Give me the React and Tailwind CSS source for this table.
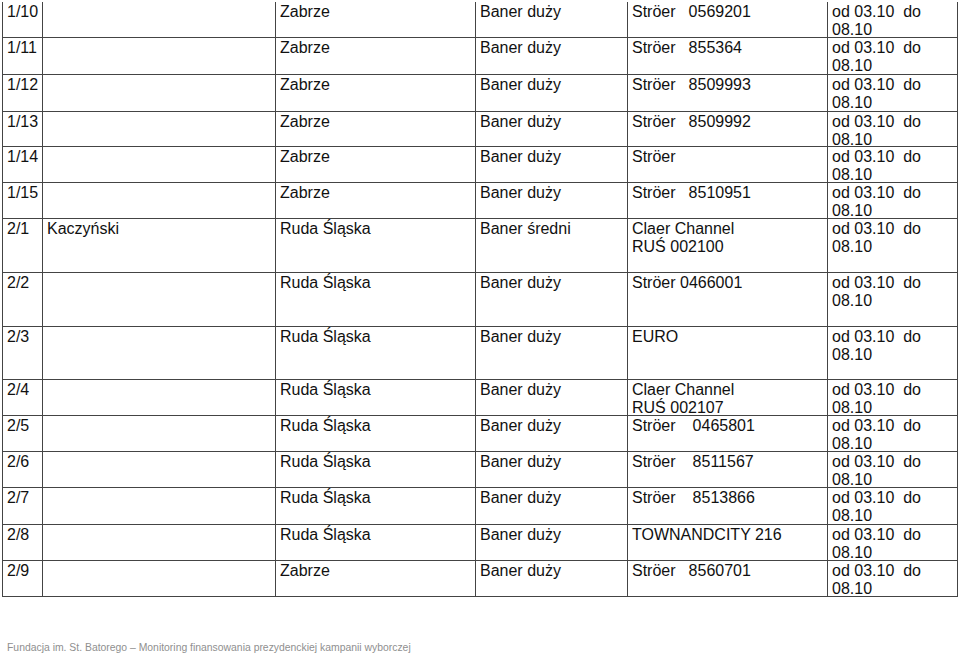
import React from 'react';

// column widths incl. right border: lines at x = 42, 275, 475, 627, 827, 957
const cols = ['w-[40px]', 'w-[233px]', 'w-[200px]', 'w-[152px]', 'w-[200px]', 'w-[130px]'];

const Stroer = ({ num, wide }) => (
    <span>
        Ströer<span className={wide ? 'ml-[17px]' : 'ml-[13px]'}>{num}</span>
    </span>
);

const Two = ({ a, b }) => (
    <span>
        {a}
        <br />
        {b}
    </span>
);

const date = <span className="whitespace-pre">{'od 03.10  do\n08.10'}</span>;

const rows = [
    { h: 'h-[36px]', c: ['1/10', '', 'Zabrze', 'Baner duży', <Stroer num="0569201" />] },
    { h: 'h-[37px]', c: ['1/11', '', 'Zabrze', 'Baner duży', <Stroer num="855364" />] },
    { h: 'h-[37px]', c: ['1/12', '', 'Zabrze', 'Baner duży', <Stroer num="8509993" />] },
    { h: 'h-[35px]', c: ['1/13', '', 'Zabrze', 'Baner duży', <Stroer num="8509992" />] },
    { h: 'h-[36px]', c: ['1/14', '', 'Zabrze', 'Baner duży', 'Ströer'] },
    { h: 'h-[36px]', c: ['1/15', '', 'Zabrze', 'Baner duży', <Stroer num="8510951" />] },
    { h: 'h-[54px]', c: ['2/1', 'Kaczyński', 'Ruda Śląska', 'Baner średni', <Two a="Claer Channel" b="RUŚ 002100" />] },
    { h: 'h-[54px]', c: ['2/2', '', 'Ruda Śląska', 'Baner duży', 'Ströer 0466001'] },
    { h: 'h-[53px]', c: ['2/3', '', 'Ruda Śląska', 'Baner duży', 'EURO'] },
    { h: 'h-[36px]', c: ['2/4', '', 'Ruda Śląska', 'Baner duży', <Two a="Claer Channel" b="RUŚ 002107" />] },
    { h: 'h-[36px]', c: ['2/5', '', 'Ruda Śląska', 'Baner duży', <Stroer num="0465801" wide />] },
    { h: 'h-[36px]', c: ['2/6', '', 'Ruda Śląska', 'Baner duży', <Stroer num="8511567" wide />] },
    { h: 'h-[37px]', c: ['2/7', '', 'Ruda Śląska', 'Baner duży', <Stroer num="8513866" wide />] },
    { h: 'h-[36px]', c: ['2/8', '', 'Ruda Śląska', 'Baner duży', 'TOWNANDCITY 216'] },
    { h: 'h-[36px]', c: ['2/9', '', 'Zabrze', 'Baner duży', <Stroer num="8560701" />] },
];

const App = () => {
    return (
        <div className="w-[960px] h-[656px] bg-white overflow-hidden font-['Liberation_Sans',Arial,sans-serif] text-[#111]">
            <div className="pt-[2px] pl-[2px]">
                <div className="w-[956px] border-l border-[#444]">
                    {rows.map((r, i) => (
                        <div key={i} className={`flex ${r.h} border-b border-[#444]`}>
                            {[...r.c, date].map((c, j) => (
                                <div
                                    key={j}
                                    className={`${cols[j]} shrink-0 border-r border-[#444] pl-[4px] pt-[1px] text-[16px] leading-[18px]`}
                                >
                                    {c}
                                </div>
                            ))}
                        </div>
                    ))}
                </div>
            </div>
            <p className="mt-[45px] pl-[7px] text-[10.4px] leading-[12px] text-[#8f8f8f]">
                Fundacja im. St. Batorego – Monitoring finansowania prezydenckiej kampanii wyborczej
            </p>
        </div>
    );
};

export default App;
